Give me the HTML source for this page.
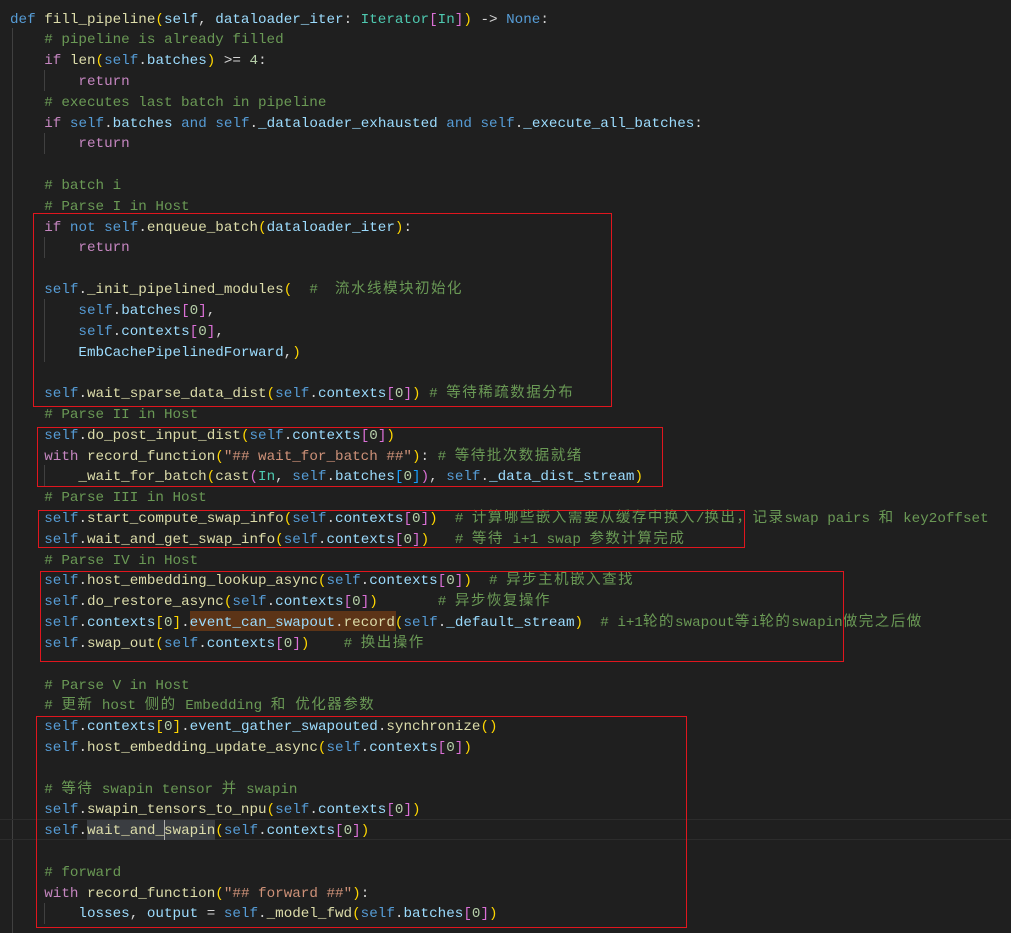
<!DOCTYPE html>
<html><head><meta charset="utf-8"><style>
html,body{margin:0;padding:0;background:#1f1f1f;width:1011px;height:933px;overflow:hidden;position:relative}
.code{position:absolute;left:10px;top:9.5px;margin:0;font-family:"Liberation Mono","Noto Sans CJK SC",monospace;font-size:14.25px;color:#d4d4d4;z-index:2}
.code div{height:20.82px;line-height:20.82px;white-space:pre;overflow:visible}
.c{font-family:"Noto Sans CJK SC",sans-serif;font-size:14.5px;letter-spacing:1.5px;line-height:10px}
.k{color:#569cd6}.f{color:#dcdcaa}.p{color:#9cdcfe}.m{color:#6a9955}.r{color:#c586c0}.n{color:#b5cea8}.s{color:#ce9178}.t{color:#4ec9b0}
.y{color:#ffd700}.v{color:#da70d6}.b{color:#179fff}
.box{position:absolute;border:1px solid #e0161e;z-index:3}
.g{position:absolute;width:1px;background:#404040;z-index:1}
.hl{position:absolute;z-index:1}
</style></head><body>
<div class="g" style="left:12px;top:28px;height:905px"></div>
<div class="g" style="left:44px;top:70px;height:21px"></div>
<div class="g" style="left:44px;top:133px;height:21px"></div>
<div class="g" style="left:44px;top:237px;height:21px"></div>
<div class="g" style="left:44px;top:299px;height:63px"></div>
<div class="g" style="left:44px;top:465px;height:21px"></div>
<div class="g" style="left:44px;top:903px;height:21px"></div>
<div class="hl" style="left:0;top:819px;width:1011px;height:21px;border-top:1px solid #2c2c2c;border-bottom:1px solid #2c2c2c;box-sizing:border-box"></div>
<div class="hl" style="left:190px;top:611px;width:206px;height:20px;background:#5c3417"></div>
<div class="hl" style="left:87px;top:820px;width:128px;height:20px;background:#3a3d41"></div>
<div class="hl" style="left:164px;top:820px;width:1px;height:20px;background:#aeafad;z-index:4"></div>
<div class="box" style="left:33px;top:213px;width:577px;height:192px"></div>
<div class="box" style="left:37px;top:427px;width:624px;height:58px"></div>
<div class="box" style="left:38px;top:510px;width:705px;height:36px"></div>
<div class="box" style="left:40px;top:571px;width:802px;height:89px"></div>
<div class="box" style="left:36px;top:716px;width:649px;height:210px"></div>
<div class="code">
<div><span class="k">def</span> <span class="f">fill_pipeline</span><span class="y">(</span><span class="p">self</span>, <span class="p">dataloader_iter</span>: <span class="t">Iterator</span><span class="v">[</span><span class="t">In</span><span class="v">]</span><span class="y">)</span> -&gt; <span class="k">None</span>:</div>
<div>    <span class="m"># pipeline is already filled</span></div>
<div>    <span class="r">if</span> <span class="f">len</span><span class="y">(</span><span class="k">self</span>.<span class="p">batches</span><span class="y">)</span> &gt;= <span class="n">4</span>:</div>
<div>        <span class="r">return</span></div>
<div>    <span class="m"># executes last batch in pipeline</span></div>
<div>    <span class="r">if</span> <span class="k">self</span>.<span class="p">batches</span> <span class="k">and</span> <span class="k">self</span>.<span class="p">_dataloader_exhausted</span> <span class="k">and</span> <span class="k">self</span>.<span class="p">_execute_all_batches</span>:</div>
<div>        <span class="r">return</span></div>
<div> </div>
<div>    <span class="m"># batch i</span></div>
<div>    <span class="m"># Parse I in Host</span></div>
<div>    <span class="r">if</span> <span class="k">not</span> <span class="k">self</span>.<span class="f">enqueue_batch</span><span class="y">(</span><span class="p">dataloader_iter</span><span class="y">)</span>:</div>
<div>        <span class="r">return</span></div>
<div> </div>
<div>    <span class="k">self</span>.<span class="f">_init_pipelined_modules</span><span class="y">(</span>  <span class="m">#  <span class="c">流水线模块初始化</span></span></div>
<div>        <span class="k">self</span>.<span class="p">batches</span><span class="v">[</span><span class="n">0</span><span class="v">]</span>,</div>
<div>        <span class="k">self</span>.<span class="p">contexts</span><span class="v">[</span><span class="n">0</span><span class="v">]</span>,</div>
<div>        <span class="p">EmbCachePipelinedForward</span>,<span class="y">)</span></div>
<div> </div>
<div>    <span class="k">self</span>.<span class="f">wait_sparse_data_dist</span><span class="y">(</span><span class="k">self</span>.<span class="p">contexts</span><span class="v">[</span><span class="n">0</span><span class="v">]</span><span class="y">)</span> <span class="m"># <span class="c">等待稀疏数据分布</span></span></div>
<div>    <span class="m"># Parse II in Host</span></div>
<div>    <span class="k">self</span>.<span class="f">do_post_input_dist</span><span class="y">(</span><span class="k">self</span>.<span class="p">contexts</span><span class="v">[</span><span class="n">0</span><span class="v">]</span><span class="y">)</span></div>
<div>    <span class="r">with</span> <span class="f">record_function</span><span class="y">(</span><span class="s">"## wait_for_batch ##"</span><span class="y">)</span>: <span class="m"># <span class="c">等待批次数据就绪</span></span></div>
<div>        <span class="f">_wait_for_batch</span><span class="y">(</span><span class="f">cast</span><span class="v">(</span><span class="t">In</span>, <span class="k">self</span>.<span class="p">batches</span><span class="b">[</span><span class="n">0</span><span class="b">]</span><span class="v">)</span>, <span class="k">self</span>.<span class="p">_data_dist_stream</span><span class="y">)</span></div>
<div>    <span class="m"># Parse III in Host</span></div>
<div>    <span class="k">self</span>.<span class="f">start_compute_swap_info</span><span class="y">(</span><span class="k">self</span>.<span class="p">contexts</span><span class="v">[</span><span class="n">0</span><span class="v">]</span><span class="y">)</span>  <span class="m"># <span class="c">计算哪些嵌入需要从缓存中换入</span>/<span class="c">换出，记录</span>swap pairs <span class="c">和</span> key2offset</span></div>
<div>    <span class="k">self</span>.<span class="f">wait_and_get_swap_info</span><span class="y">(</span><span class="k">self</span>.<span class="p">contexts</span><span class="v">[</span><span class="n">0</span><span class="v">]</span><span class="y">)</span>   <span class="m"># <span class="c">等待</span> i+1 swap <span class="c">参数计算完成</span></span></div>
<div>    <span class="m"># Parse IV in Host</span></div>
<div>    <span class="k">self</span>.<span class="f">host_embedding_lookup_async</span><span class="y">(</span><span class="k">self</span>.<span class="p">contexts</span><span class="v">[</span><span class="n">0</span><span class="v">]</span><span class="y">)</span>  <span class="m"># <span class="c">异步主机嵌入查找</span></span></div>
<div>    <span class="k">self</span>.<span class="f">do_restore_async</span><span class="y">(</span><span class="k">self</span>.<span class="p">contexts</span><span class="v">[</span><span class="n">0</span><span class="v">]</span><span class="y">)</span>       <span class="m"># <span class="c">异步恢复操作</span></span></div>
<div>    <span class="k">self</span>.<span class="p">contexts</span><span class="y">[</span><span class="n">0</span><span class="y">]</span>.<span class="p">event_can_swapout</span>.<span class="f">record</span><span class="y">(</span><span class="k">self</span>.<span class="p">_default_stream</span><span class="y">)</span>  <span class="m"># i+1<span class="c">轮的</span>swapout<span class="c">等</span>i<span class="c">轮的</span>swapin<span class="c">做完之后做</span></span></div>
<div>    <span class="k">self</span>.<span class="f">swap_out</span><span class="y">(</span><span class="k">self</span>.<span class="p">contexts</span><span class="v">[</span><span class="n">0</span><span class="v">]</span><span class="y">)</span>    <span class="m"># <span class="c">换出操作</span></span></div>
<div> </div>
<div>    <span class="m"># Parse V in Host</span></div>
<div>    <span class="m"># <span class="c">更新</span> host <span class="c">侧的</span> Embedding <span class="c">和</span> <span class="c">优化器参数</span></span></div>
<div>    <span class="k">self</span>.<span class="p">contexts</span><span class="y">[</span><span class="n">0</span><span class="y">]</span>.<span class="p">event_gather_swapouted</span>.<span class="f">synchronize</span><span class="y">()</span></div>
<div>    <span class="k">self</span>.<span class="f">host_embedding_update_async</span><span class="y">(</span><span class="k">self</span>.<span class="p">contexts</span><span class="v">[</span><span class="n">0</span><span class="v">]</span><span class="y">)</span></div>
<div> </div>
<div>    <span class="m"># <span class="c">等待</span> swapin tensor <span class="c">并</span> swapin</span></div>
<div>    <span class="k">self</span>.<span class="f">swapin_tensors_to_npu</span><span class="y">(</span><span class="k">self</span>.<span class="p">contexts</span><span class="v">[</span><span class="n">0</span><span class="v">]</span><span class="y">)</span></div>
<div>    <span class="k">self</span>.<span class="f">wait_and_swapin</span><span class="y">(</span><span class="k">self</span>.<span class="p">contexts</span><span class="v">[</span><span class="n">0</span><span class="v">]</span><span class="y">)</span></div>
<div> </div>
<div>    <span class="m"># forward</span></div>
<div>    <span class="r">with</span> <span class="f">record_function</span><span class="y">(</span><span class="s">"## forward ##"</span><span class="y">)</span>:</div>
<div>        <span class="p">losses</span>, <span class="p">output</span> = <span class="k">self</span>.<span class="f">_model_fwd</span><span class="y">(</span><span class="k">self</span>.<span class="p">batches</span><span class="v">[</span><span class="n">0</span><span class="v">]</span><span class="y">)</span></div>
</div>
</body></html>
